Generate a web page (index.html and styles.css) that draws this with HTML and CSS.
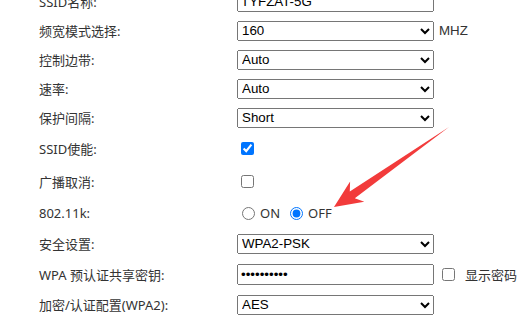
FILE: index.html
```html
<!DOCTYPE html>
<html lang="zh-CN">
<head>
<meta charset="utf-8">
<title>无线设置</title>
<link rel="stylesheet" href="styles.css">
</head>
<body>
<div class="form">
  <div class="label">SSID名称:</div>
  <div class="field"><input class="text" type="text" value="TYFZAT-5G"></div>

  <div class="label">频宽模式选择:</div>
  <div class="field"><select class="sel"><option>160</option></select><span class="unit">MHZ</span></div>

  <div class="label">控制边带:</div>
  <div class="field"><select class="sel"><option>Auto</option></select></div>

  <div class="label">速率:</div>
  <div class="field"><select class="sel"><option>Auto</option></select></div>

  <div class="label">保护间隔:</div>
  <div class="field"><select class="sel"><option>Short</option></select></div>

  <div class="label">SSID使能:</div>
  <div class="field"><input type="checkbox" checked></div>

  <div class="label">广播取消:</div>
  <div class="field"><input type="checkbox"></div>

  <div class="label">802.11k:</div>
  <div class="field radios">
    <label class="opt"><input type="radio" name="k">ON</label>
    <label class="opt"><input type="radio" name="k" checked>OFF</label>
  </div>

  <div class="label">安全设置:</div>
  <div class="field"><select class="sel"><option>WPA2-PSK</option></select></div>

  <div class="label">WPA 预认证共享密钥:</div>
  <div class="field"><input class="text" type="password" value="1234567890"><label class="show"><input type="checkbox">显示密码</label></div>

  <div class="label">加密/认证配置(WPA2):</div>
  <div class="field"><select class="sel"><option>AES</option></select></div>
</div>

<svg class="arrow" width="532" height="332" viewBox="0 0 532 332" aria-hidden="true">
  <polygon points="449,127 354.8,198.2 364.3,201.8 334,207 350.1,181.6 349.8,191.6" fill="#f23b3b"/>
</svg>
</body>
</html>
```

FILE: styles.css
```css
html, body {
  margin: 0;
  padding: 0;
  background: #ffffff;
  overflow: hidden;
}

body {
  width: 532px;
  height: 332px;
  position: relative;
  font-family: "Noto Sans", "Noto Sans CJK SC", sans-serif;
  font-size: 13px;
  color: #333333;
}

.form {
  display: grid;
  grid-template-columns: 198px 1fr;
  grid-template-rows: 29px 29px 29px 29px 29px 33px 33px 30px 31px 31px 29px;
  margin-top: -13px;
  padding-left: 39px;
}

.label {
  display: flex;
  align-items: center;
  white-space: nowrap;
}

.field {
  display: flex;
  align-items: center;
  white-space: nowrap;
}

.sel {
  width: 197px;
  height: 20px;
  margin: 0;
  font-family: "Liberation Sans", Arial, sans-serif;
  font-size: 13.33px;
  color: #000000;
}

.text {
  width: 197px;
  height: 21px;
  box-sizing: border-box;
  margin: 0;
  font-family: "Liberation Sans", Arial, sans-serif;
  font-size: 13.33px;
  color: #000000;
}

.unit {
  margin-left: 5px;
  font-family: "Liberation Sans", Arial, sans-serif;
  font-size: 13.33px;
  color: #333333;
}

.radios {
  gap: 5px;
}

.opt {
  display: flex;
  align-items: center;
}

.opt input {
  margin: 3px 5px 3px 5px;
}

.show {
  display: flex;
  align-items: center;
  margin-left: 4px;
}

.show input {
  margin-right: 10px;
}

.arrow {
  position: absolute;
  left: 0;
  top: 0;
  pointer-events: none;
}
```
